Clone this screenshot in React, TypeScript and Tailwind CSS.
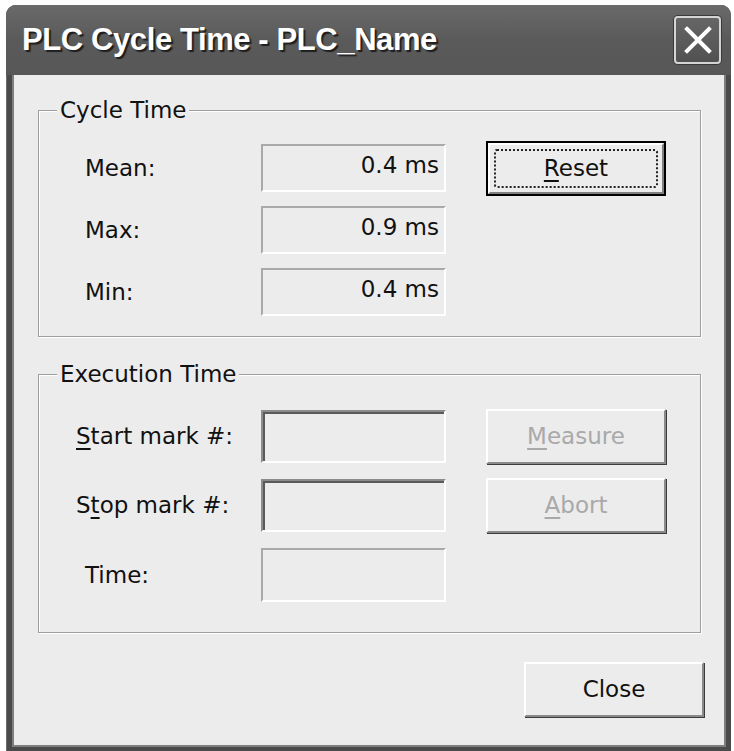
import type { ReactNode } from "react";

// Raised 3D push button in the classic dialog look.
function PushButton({
  children,
  disabled,
  isDefault,
  className = "",
}: {
  children: ReactNode;
  disabled?: boolean;
  isDefault?: boolean;
  className?: string;
}) {
  if (isDefault) {
    return (
      <button
        type="button"
        className={`h-[55px] w-[180px] shrink-0 border-2 border-black bg-[#ececec] p-0 ${className}`}
      >
        <div className="flex h-full w-full border-2 border-t-white border-l-white border-r-[#808080] border-b-[#808080] p-[4px]">
          <div className="flex flex-1 items-center justify-center rounded-[3px] border-2 border-dotted border-[#222] text-[23px] leading-none text-[#111]">
            {children}
          </div>
        </div>
      </button>
    );
  }
  return (
    <button
      type="button"
      disabled={disabled}
      className={`flex h-[55px] w-[180px] shrink-0 items-center justify-center border-2 border-t-white border-l-white border-r-[#8a8a8a] border-b-[#8a8a8a] bg-[#ececec] text-[23px] leading-none shadow-[1px_1px_0_#3c3c3c] ${
        disabled ? "text-[#a9a9a9]" : "text-[#111]"
      } ${className}`}
    >
      {children}
    </button>
  );
}

// Read-only value box (static edge).
function ValueBox({ value }: { value?: string }) {
  return (
    <div className="h-[48px] w-[185px] shrink-0 border-2 border-t-[#a9a9a9] border-l-[#a9a9a9] border-r-white border-b-white pr-[5px] pt-[6px] text-right text-[23px] leading-[27px] text-[#111]">
      {value}
    </div>
  );
}

// Sunken edit field (disabled).
function EditBox({ flat }: { flat?: boolean }) {
  return flat ? (
    <div className="h-[54px] w-[185px] shrink-0 border-2 border-t-[#a9a9a9] border-l-[#a9a9a9] border-r-white border-b-white" />
  ) : (
    <div className="h-[53px] w-[185px] shrink-0 border-2 border-t-[#8c8c8c] border-l-[#8c8c8c] border-r-white border-b-white">
      <div className="h-full w-full border-t-2 border-l-2 border-t-[#5a5a5a] border-l-[#5a5a5a]" />
    </div>
  );
}

function GroupBox({
  title,
  className = "",
  children,
}: {
  title: string;
  className?: string;
  children: ReactNode;
}) {
  return (
    <fieldset
      className={`border border-[#9f9f9f] shadow-[inset_1px_1px_0_#ffffff,1px_1px_0_#ffffff] ${className}`}
    >
      <legend className="ml-[18px] bg-[#ececec] px-[3px] text-[23px] leading-[28px] text-[#111]">
        {title}
      </legend>
      {children}
    </fieldset>
  );
}

function Label({ children, pad }: { children: ReactNode; pad: string }) {
  return (
    <div className={`w-[222px] shrink-0 text-[23px] leading-none text-[#111] ${pad}`}>
      {children}
    </div>
  );
}

export default function App() {
  return (
    <div className="h-[751px] w-[734px] overflow-hidden bg-white pl-[6px] pr-[3px] pt-[5px] font-['DejaVu_Sans',sans-serif]">
      <div className="flex h-[746px] flex-col rounded-t-[10px] bg-[#4a4a4a] shadow-[inset_1px_1px_0_#6e6e6e]">
        {/* title bar */}
        <div className="flex h-[70px] shrink-0 items-center rounded-t-[10px] bg-gradient-to-b from-[#6a6a6a] via-[#5a5a5a] to-[#575757] pl-[16px] pr-[10px]">
          <div className="flex-1 font-['Liberation_Sans',sans-serif] text-[31px] font-bold tracking-[-0.4px] text-white [text-shadow:2px_2px_1px_#1e1e1e]">
            PLC Cycle Time - PLC_Name
          </div>
          <button
            type="button"
            className="flex h-[48px] w-[47px] items-center justify-center rounded-[4px] border-2 border-[#d4d4d4] bg-gradient-to-b from-[#666666] to-[#515151] shadow-[0_0_0_1px_#3a3a3a]"
          >
            <svg width="28" height="28" viewBox="0 0 28 28">
              <path
                d="M3 3 L25 25 M25 3 L3 25"
                stroke="white"
                strokeWidth="4"
                strokeLinecap="square"
              />
            </svg>
          </button>
        </div>

        {/* client area */}
        <div className="flex flex-1 px-[6px] pb-[4px] pr-[5px]">
          <div className="flex flex-1 flex-col border-2 border-t-0 border-[#7e7e7e] bg-[#ececec] pl-[24px] pr-[23px] pt-[21px]">
            <GroupBox title="Cycle Time">
              <div className="flex flex-col gap-[14px] pb-[20px] pt-[20px]">
                <div className="flex h-[48px] items-center">
                  <Label pad="pl-[46px]">Mean:</Label>
                  <ValueBox value="0.4 ms" />
                  <PushButton isDefault className="ml-[40px]">
                    <span>
                      <u className="decoration-[2px] underline-offset-[4px]">R</u>eset
                    </span>
                  </PushButton>
                </div>
                <div className="flex h-[48px] items-center">
                  <Label pad="pl-[46px]">Max:</Label>
                  <ValueBox value="0.9 ms" />
                </div>
                <div className="flex h-[48px] items-center">
                  <Label pad="pl-[46px]">Min:</Label>
                  <ValueBox value="0.4 ms" />
                </div>
              </div>
            </GroupBox>

            <GroupBox title="Execution Time" className="mt-[23px]">
              <div className="flex flex-col gap-[16px] pb-[30px] pt-[22px]">
                <div className="flex h-[53px] items-center">
                  <Label pad="pl-[37px]">
                    <u className="decoration-[2px] underline-offset-[4px]">S</u>tart mark #:
                  </Label>
                  <EditBox />
                  <PushButton disabled className="ml-[40px]">
                    <span>
                      <u className="decoration-[2px] underline-offset-[4px]">M</u>easure
                    </span>
                  </PushButton>
                </div>
                <div className="flex h-[53px] items-center">
                  <Label pad="pl-[37px]">
                    S<u className="decoration-[2px] underline-offset-[4px]">t</u>op mark #:
                  </Label>
                  <EditBox />
                  <PushButton disabled className="ml-[40px]">
                    <span>
                      <u className="decoration-[2px] underline-offset-[4px]">A</u>bort
                    </span>
                  </PushButton>
                </div>
                <div className="flex h-[54px] items-center">
                  <Label pad="pl-[46px]">Time:</Label>
                  <EditBox flat />
                </div>
              </div>
            </GroupBox>

            <div className="mt-[29px] flex justify-end">
              <PushButton className="mr-[-3px]">Close</PushButton>
            </div>
          </div>
        </div>
      </div>
    </div>
  );
}
